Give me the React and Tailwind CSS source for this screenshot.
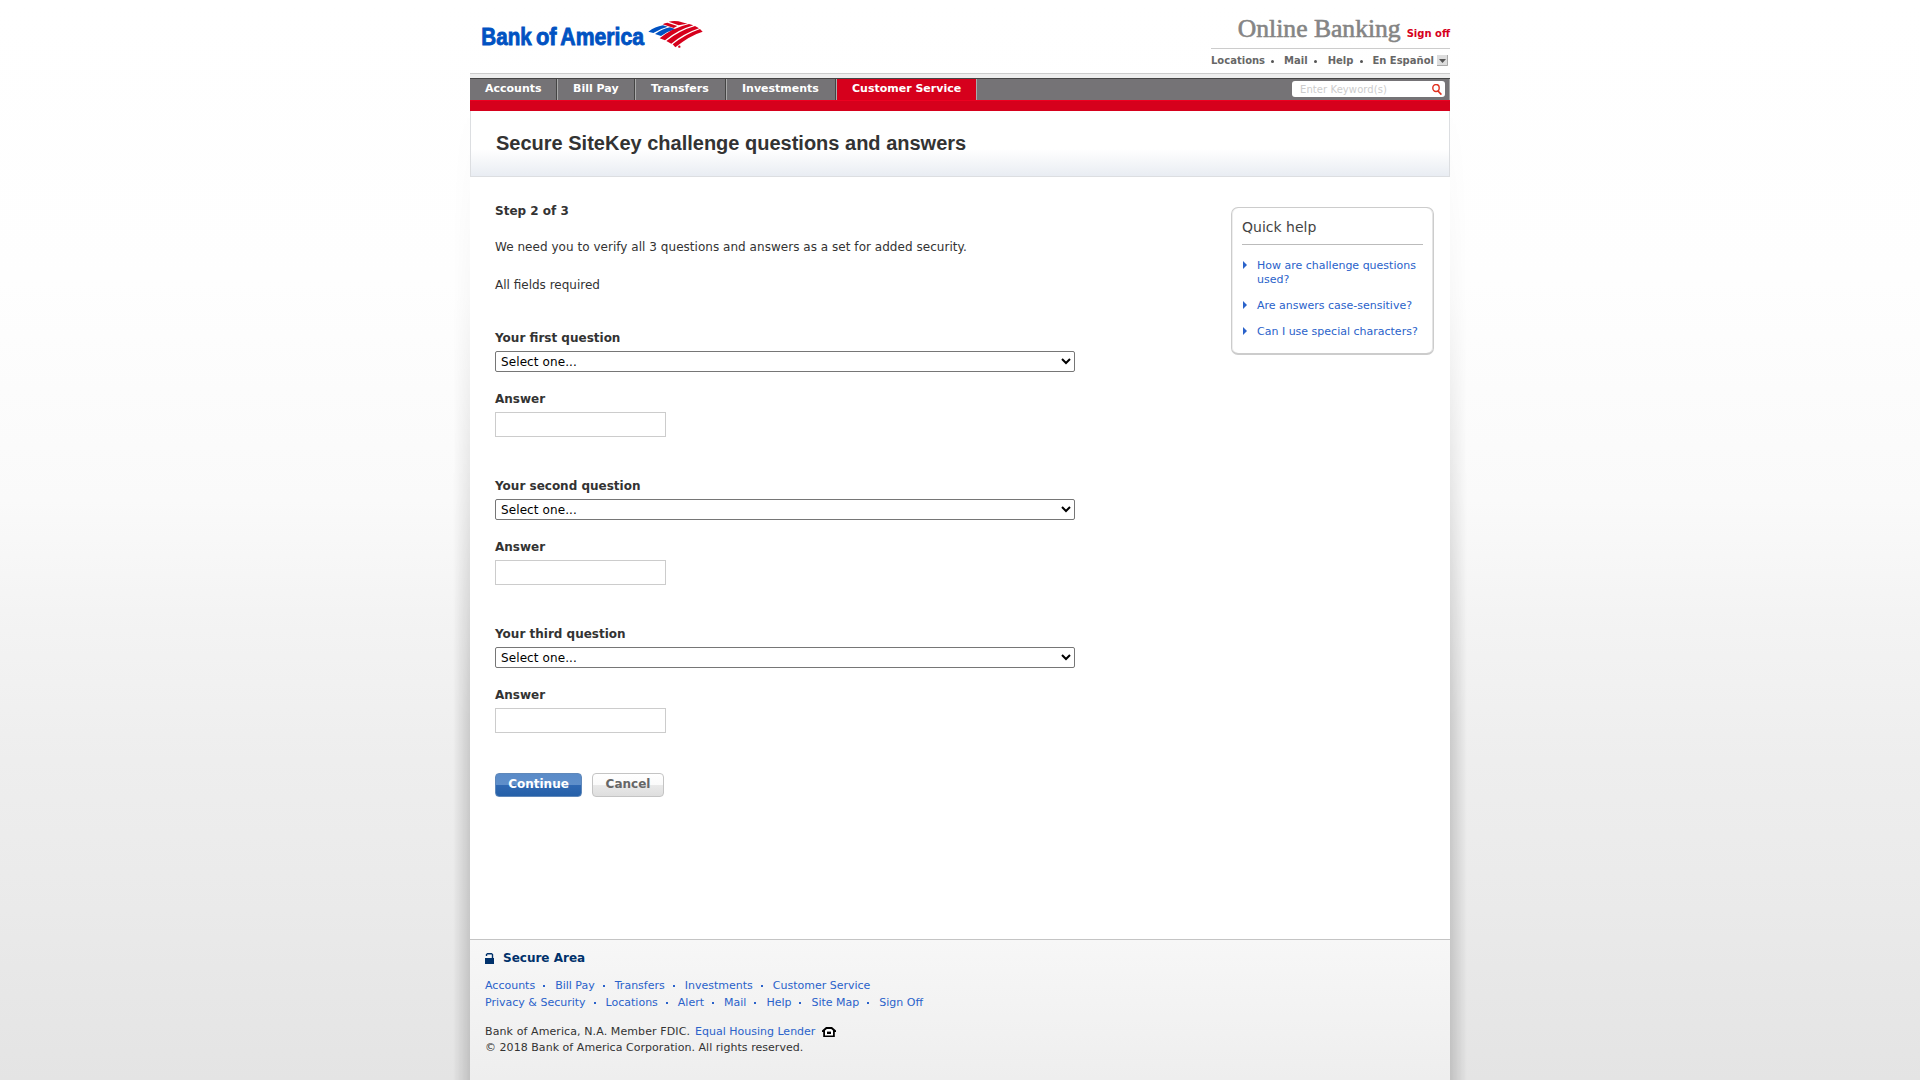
import { Fragment } from "react";

const tabs = [
  { label: "Accounts", width: "w-[88px]" },
  { label: "Bill Pay", width: "w-[78px]" },
  { label: "Transfers", width: "w-[91px]" },
  { label: "Investments", width: "w-[110px]" },
];

const ordinals = ["first", "second", "third"];

const helpLinks = [
  "How are challenge questions used?",
  "Are answers case-sensitive?",
  "Can I use special characters?",
];

const footerRows = [
  ["Accounts", "Bill Pay", "Transfers", "Investments", "Customer Service"],
  ["Privacy & Security", "Locations", "Alert", "Mail", "Help", "Site Map", "Sign Off"],
];

function Logo() {
  return (
    <svg className="mt-[16px] ml-[10px] h-[36px] w-[228px]" viewBox="60 48 684 108" aria-label="Bank of America">
      <g
        fill="#0052c2"
        stroke="#0052c2"
        strokeWidth="2.6"
        fontFamily="'Liberation Sans', Arial, sans-serif"
        fontWeight="700"
        fontSize="71"
      >
        <text x="64" y="134" textLength="151" lengthAdjust="spacingAndGlyphs">Bank</text>
        <text x="228" y="134" textLength="62" lengthAdjust="spacingAndGlyphs">of</text>
        <text x="301" y="134" textLength="251" lengthAdjust="spacingAndGlyphs">America</text>
      </g>
      <g fill="#0052c2">
        <path d="M565 95Q585 80 609 76L623 80Q600 86 580 99Z" />
        <path d="M585 102Q606 87 630 82L647 88Q624 93 603 108Z" />
      </g>
      <g fill="#d6001c">
        <path d="M626 65Q641 61 655 64L682 71Q668 73 656 76Z" />
        <path d="M608 73Q615 69 622 68L652 78L641 84Z" />
        <path d="M599 115Q636 84 687 72L700 76Q652 90 615 121Z" />
        <path d="M619 123Q657 92 705 78L717 85Q672 100 634 131Z" />
        <path d="M638 133Q675 103 720 87L728 95Q690 106 646 142Z" />
        <circle cx="658" cy="140" r="3.5" />
      </g>
    </svg>
  );
}

function Bullet({ className }) {
  return <span className={`mt-[2px] h-[3px] w-[3px] rounded-full bg-[#555] ${className}`} />;
}

function Header() {
  return (
    <header className="flex h-[73px] justify-between">
      <Logo />
      <div className="w-[239px] font-bold">
        <div className="flex h-[48px] items-baseline justify-end pt-[14px]">
          <span className="mr-[6px] font-['Liberation_Serif',serif] text-[25.6px] leading-[29px] font-normal whitespace-nowrap text-[#858585] [-webkit-text-stroke:0.6px_#858585]">
            Online Banking
          </span>
          <a className="text-[10px] whitespace-nowrap text-[#d6001c]">Sign off</a>
        </div>
        <div className="flex h-[24px] items-center border-t border-[#ccc] text-[10px] whitespace-nowrap text-[#666]">
          <a>Locations</a>
          <Bullet className="mr-[10px] ml-[6px]" />
          <a>Mail</a>
          <Bullet className="mr-[11px] ml-[6px]" />
          <a>Help</a>
          <Bullet className="mr-[9px] ml-[7px]" />
          <a>En Español</a>
          <svg className="ml-[3px] h-[11px] w-[11px]" viewBox="0 0 11 11">
            <rect width="11" height="11" fill="#ddd" />
            <path d="M0 10.5H10.5V0" fill="none" stroke="#aaa" />
            <path d="M2 4H9L5.5 8Z" fill="#555" />
          </svg>
        </div>
      </div>
    </header>
  );
}

function Nav() {
  return (
    <nav className="border-t border-[#ccc]">
      <div className="h-[4px] bg-[#eee]" />
      <div className="flex h-[22px] border-t border-[#444] bg-[#757376] text-[11px] leading-[19px] font-bold whitespace-nowrap text-white">
        {tabs.map((t) => (
          <a key={t.label} className={`flex pl-[15px] ${t.width}`}>
            {t.label}
            <span className="ml-auto w-[2px] border-r border-[#aaa] bg-[#444]" />
          </a>
        ))}
        <a className="w-[140px] border-r border-[#aaa] bg-[#d6001c] pl-[15px]">Customer Service</a>
        <div className="mt-[2px] mr-[4px] ml-auto flex h-[16px] w-[153px] items-center rounded-[3px] bg-white pr-[3px] pl-[8px]">
          <span className="text-[10px] leading-[17px] font-normal tracking-[0.08px] text-[#ccc]">Enter Keyword(s)</span>
          <svg className="ml-auto h-[11px] w-[10px]" viewBox="0 0 10 11" fill="none" stroke="#e0301e">
            <ellipse cx="4" cy="4" rx="3.2" ry="3.5" strokeWidth="1.4" />
            <path d="M6 7L9.4 10.6" strokeWidth="1.7" />
          </svg>
        </div>
        <span className="w-px bg-[#aaa]" />
      </div>
      <div className="h-[11px] border-t border-[#ee0020] bg-[#d6001c]" />
    </nav>
  );
}

function Question({ ordinal }) {
  return (
    <section className="h-[148px]">
      <h3 className="text-[12px] leading-[21px] font-bold">Your {ordinal} question</h3>
      <select className="mt-[2px] block h-[21px] w-[580px] rounded-[2px] border border-[#767676] bg-white pl-px text-[12px] tracking-[0.1px] text-black">
        <option>Select one...</option>
      </select>
      <h3 className="mt-[19px] text-[12px] leading-[16px] font-bold">Answer</h3>
      <input className="mt-[5px] block h-[25px] w-[171px] border border-[#ccc] bg-white" />
    </section>
  );
}

function QuickHelp() {
  return (
    <aside className="mt-[30px] mr-[16px] h-[148px] w-[203px] rounded-[7px] border border-b-2 border-[#ccc] bg-white px-[10px] shadow-[inset_-1px_0_0_#e4e4e4,inset_1px_0_0_#eee]">
      <h2 className="mt-[9px] h-[28px] border-b border-[#bbb] text-[14px] leading-[20px] text-[#444]">Quick help</h2>
      <ul className="mt-[14px] flex flex-col gap-[12px] text-[11px] leading-[14px] text-[#2a62ca]">
        {helpLinks.map((t) => (
          <li key={t} className="flex">
            <svg className="mt-[2px] mr-[10px] ml-px h-[8px] w-[4px] shrink-0" viewBox="0 0 4 8" fill="#2a62ca">
              <path d="M0 0L4 4L0 8Z" />
            </svg>
            <a className="-mr-[5px]">{t}</a>
          </li>
        ))}
      </ul>
    </aside>
  );
}

function Footer() {
  return (
    <footer className="h-[141px] border-t border-[#c4c4c4] bg-linear-to-b from-[#f7f7f7] to-[#eeeeee] pl-[15px] text-[11px] text-[#333]">
      <h3 className="mt-[11px] flex items-center text-[12px] leading-[15px] font-bold text-[#00316b]">
        <svg className="mr-[9px] h-[11px] w-[9px]" viewBox="0 0 9 11" fill="#00316b">
          <path d="M0 5H9V11H0Z" />
          <path d="M1.5 3V1.5L2.5 .7H6.5L7.5 1.5V5" fill="none" stroke="#00316b" strokeWidth="1.4" />
        </svg>
        Secure Area
      </h3>
      <div className="mt-[11px] leading-[17px] text-[#2a62ca]">
        {footerRows.map((row) => (
          <div key={row[0]} className="flex items-center whitespace-nowrap">
            {row.map((t, i) => (
              <Fragment key={t}>
                {i > 0 && <span className="mr-[10px] ml-[8px] h-[2px] w-[2px] bg-[#2a62ca]" />}
                <a>{t}</a>
              </Fragment>
            ))}
          </div>
        ))}
      </div>
      <div className="mt-[13px] leading-[16px]">
        <p className="flex items-center whitespace-nowrap">
          <span className="tracking-[0.1px]">Bank of America, N.A. Member FDIC.</span>
          <a className="ml-[5px] text-[#2a62ca]">Equal Housing Lender</a>
          <svg className="ml-[7px] h-[10px] w-[14px]" viewBox="0 0 14 10">
            <path d="M0 3.4L4 0H10L14 3.4V5H12.8V10H1.2V5H0Z" />
            <path d="M3 3.4L4.8 2H9.2L11 3.4V8.4H3Z" fill="#fff" />
            <path d="M5 4.6H9V7H5Z" />
          </svg>
        </p>
        <p className="tracking-[0.04px]">© 2018 Bank of America Corporation. All rights reserved.</p>
      </div>
    </footer>
  );
}

export default function App() {
  return (
    <div className="flex h-[1080px] justify-center overflow-hidden bg-[linear-gradient(to_bottom,#fff_0,#fefefe_280px,#fafafa_500px,#f3f3f3_630px,#eeeeee_760px,#eaeaea_910px,#e4e4e4_1080px)] font-['DejaVu_Sans',Verdana,sans-serif] text-[#333]">
      <div className="w-[17px] bg-linear-to-l from-black/15 to-black/0 mask-[linear-gradient(to_bottom,transparent_100px,rgba(0,0,0,.15)_300px,black_720px)]" />
      <div className="flex w-[980px] flex-col">
        <Header />
        <Nav />
        <div className="h-[66px] border border-t-0 border-[#dcdee1] bg-[linear-gradient(to_bottom,#fff_0,#fff_38px,#e8ecf2_66px)] pt-[20px] pl-[25px]">
          <h1 className="font-['Liberation_Sans',Arial,sans-serif] text-[20px] leading-[24px] font-bold">
            Secure SiteKey challenge questions and answers
          </h1>
        </div>
        <main className="flex h-[762px] justify-between bg-white pl-[25px]">
          <div className="pt-[26px] text-[12px] leading-[17px]">
            <p className="font-bold">Step 2 of 3</p>
            <p className="mt-[19px] tracking-[0.035px]">
              We need you to verify all 3 questions and answers as a set for added security.
            </p>
            <p className="mt-[21px]">All fields required</p>
            <div className="mt-[34px]">
              {ordinals.map((o) => (
                <Question key={o} ordinal={o} />
              ))}
            </div>
            <div className="mt-[1px] flex h-[24px] gap-[10px] font-bold">
              <button className="w-[87px] rounded-[4px] border border-[#5f88ba] bg-[linear-gradient(to_bottom,#5a8bc8_0,#5f8fca_50%,#2f68b2_51%,#2560a8_100%)] pb-[2px] text-white">
                Continue
              </button>
              <button className="w-[72px] rounded-[4px] border border-[#c4c4c4] bg-[linear-gradient(to_bottom,#fff_0,#fafafa_50%,#e9e9e9_51%,#dedede_100%)] pb-[2px] text-[#666]">
                Cancel
              </button>
            </div>
          </div>
          <QuickHelp />
        </main>
        <Footer />
      </div>
      <div className="w-[17px] bg-linear-to-r from-black/15 to-black/0 mask-[linear-gradient(to_bottom,transparent_100px,rgba(0,0,0,.15)_300px,black_720px)]" />
    </div>
  );
}
